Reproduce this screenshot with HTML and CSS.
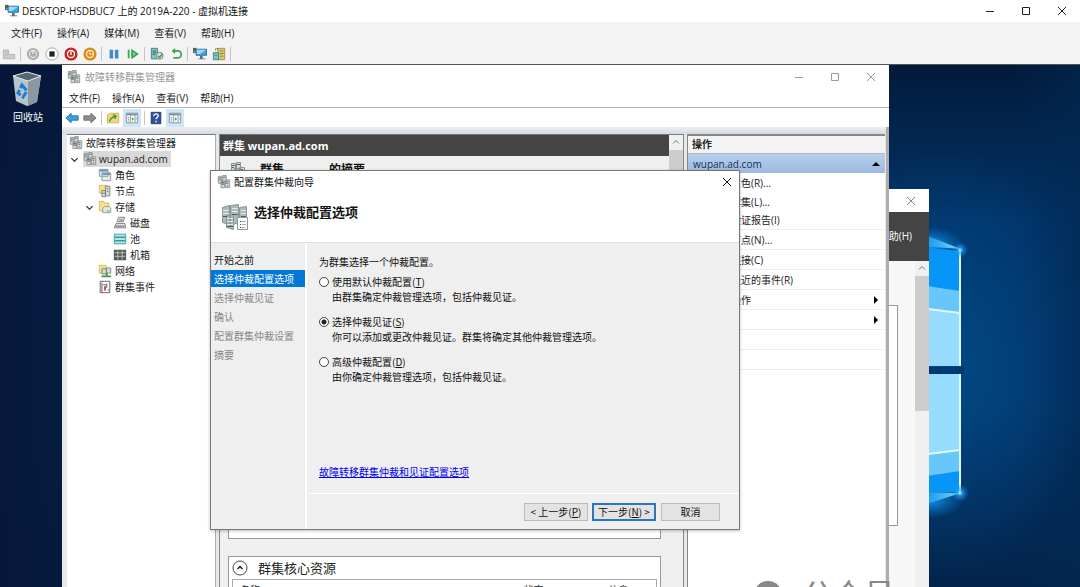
FILE: index.html
```html
<!DOCTYPE html>
<html lang="zh-CN">
<head>
    <meta charset="UTF-8">
    <meta name="viewport" content="width=device-width, initial-scale=1.0">
    <title>虚拟机连接</title>
    <link rel="stylesheet" href="styles.css">
</head>
<body>
    <!-- 公用图标 -->
    <svg class="sprite" aria-hidden="true">
        <symbol id="i-cluster" viewBox="0 0 16 16">
            <path fill="#d5dada" stroke="#8b9293" d="M1.500 1.500h4v8h-4zM6.500 .5h4v9h-4zM4.500 6.500h4v8h-4zM9.500 5.500h5v9h-5z"/>
            <path stroke="#596162" d="M2 3.500h3M7 2.500h3M2 5.500h2M5 8.500h3M5 10.500h3M11 7.500h2M11 9.500h2M11 12.500h2"/>
        </symbol>
        <symbol id="i-folder" viewBox="0 0 16 16">
            <path fill="#f5df87" stroke="#d6b95e" d="M1.500 1.500h5l1 2h5v9h-11z"/>
            <path fill="#e4e8e8" stroke="#8c9293" d="M5.500 9.500l2-2h5l2 2v5h-9z"/>
            <path stroke="#5f8d4f" d="M10 12.500h3"/>
        </symbol>
        <symbol id="i-close" viewBox="0 0 12 12">
            <path fill="none" stroke="currentColor" d="M2 2l8 8M10 2l-8 8"/>
        </symbol>
        <symbol id="i-max" viewBox="0 0 12 12">
            <path fill="none" stroke="currentColor" d="M2.500 2.500h7v7h-7z"/>
        </symbol>
        <symbol id="i-min" viewBox="0 0 12 12">
            <path fill="none" stroke="currentColor" d="M2 6.500h8"/>
        </symbol>
        <symbol id="i-up" viewBox="0 0 12 12">
            <path fill="none" stroke="currentColor" d="M3 7.500l3-3 3 3"/>
        </symbol>
        <symbol id="i-down" viewBox="0 0 12 12">
            <path fill="none" stroke="#444" stroke-width="1.500" d="M2.500 4.500l3.500 3.500 3.500-3.500"/>
        </symbol>
        <symbol id="i-monitor" viewBox="0 0 16 16">
            <path fill="#35a7e3" stroke="#326b91" d="M3.500 2.500h12v7h-12z"/>
            <path fill="#98daf7" d="M4 3h11l-7 5H4z"/>
            <path fill="#5b6e7b" d="M8 10h3v3h3v1H6v-1h2z"/>
            <path fill="#4c6171" d="M0 1h4v6H0z"/>
            <path fill="#8fe27a" d="M1 5h2v1H1z"/>
        </symbol>
        <symbol id="i-panel" viewBox="0 0 16 16">
            <path fill="#fff" stroke="#7a8d9b" d="M1.500 2.500h13v11h-13z"/>
            <path stroke="#7a8d9b" stroke-width="2" d="M2 4h12"/>
            <path fill="none" stroke="#7a8d9b" d="M6.500 5v8M11.500 5v8M3 7.500h2M3 9.500h2M3 11.500h2M13 7.500h1M13 9.500h1"/>
            <path fill="#47a447" d="M8 7l2.500 2L8 11z"/>
        </symbol>
    </svg>

    <header class="vm-title">
        <svg class="icon"><use href="#i-monitor"/></svg>
        <span class="grow">DESKTOP-HSDBUC7 上的 2019A-220 - 虚拟机连接</span>
        <div class="win-buttons dark">
            <button aria-label="最小化"><svg><use href="#i-min"/></svg></button>
            <button aria-label="最大化"><svg><use href="#i-max"/></svg></button>
            <button aria-label="关闭"><svg><use href="#i-close"/></svg></button>
        </div>
    </header>
    <nav class="menu vm-menu">
        <button>文件(F)</button>
        <button>操作(A)</button>
        <button>媒体(M)</button>
        <button>查看(V)</button>
        <button>帮助(H)</button>
    </nav>
    <div class="vm-toolbar">
        <button aria-label="Ctrl+Alt+Del"><svg class="icon" viewBox="0 0 16 16"><path fill="#c9cccd" stroke="#aeb2b3" d="M1.500 3.500h6v5h7v5h-13zM4 6h2M4 9h3"/></svg></button>
        <i class="sep"></i>
        <button aria-label="启动"><svg class="icon" viewBox="0 0 16 16"><circle cx="8" cy="8" r="7" fill="#a9abac"/><circle cx="8" cy="8" r="4" fill="none" stroke="#e4e4e4" stroke-width="1.500"/><path stroke="#eee" stroke-width="1.500" d="M8 4v4"/></svg></button>
        <button aria-label="关闭虚拟机"><svg class="icon" viewBox="0 0 16 16"><circle cx="8" cy="8" r="7" fill="#fff" stroke="#a0a0a0"/><path fill="#222" d="M5 5h6v6H5z"/></svg></button>
        <button aria-label="关机"><svg class="icon" viewBox="0 0 16 16"><circle cx="8" cy="8" r="7.500" fill="#c92520"/><circle cx="8" cy="8" r="4" fill="none" stroke="#fff" stroke-width="1.500"/><path stroke="#fff" stroke-width="1.500" d="M8 5v4"/></svg></button>
        <button aria-label="保存"><svg class="icon" viewBox="0 0 16 16"><circle cx="8" cy="8" r="7.500" fill="#dc8b18"/><circle cx="8" cy="8" r="4" fill="none" stroke="#ffeac0" stroke-width="1.500"/><path stroke="#ffeac0" stroke-width="1.500" d="M8 5v3h3"/></svg></button>
        <i class="sep"></i>
        <button aria-label="暂停"><svg class="icon" viewBox="0 0 16 16"><path fill="#4289c8" d="M3 3h4v10H3zM9 3h4v10H9z"/></svg></button>
        <button aria-label="重置"><svg class="icon" viewBox="0 0 16 16"><path fill="#35a852" d="M2 3h2v10H2z"/><path fill="#8fd39f" stroke="#35a852" stroke-width="2" d="M7 4l6 4-6 4z"/></svg></button>
        <i class="sep"></i>
        <button aria-label="检查点"><svg class="icon" viewBox="0 0 16 16"><path fill="#8cc5bd" stroke="#3f7f78" d="M1.500 1.500h7v12h-7z"/><path stroke="#295e59" d="M3 4.500h4M3 6.500h4M3 8.500h3"/><circle cx="11" cy="10" r="4" fill="#d7e0dc" stroke="#6c7875"/><path fill="none" stroke="#3c9b48" stroke-width="1.500" d="M9 10l2 2 3-4"/></svg></button>
        <button aria-label="还原"><svg class="icon" viewBox="0 0 16 16"><path fill="none" stroke="#3fa24e" stroke-width="2" d="M5 4.500h5a4 4 0 0 1 0 8H5"/><path fill="#3fa24e" d="M7 1v7L3 4.500z"/></svg></button>
        <i class="sep"></i>
        <button aria-label="增强会话"><svg class="icon"><use href="#i-monitor"/></svg></button>
        <button aria-label="共享"><svg class="icon" viewBox="0 0 16 16"><path fill="#e3c367" stroke="#ac8c3b" d="M6.500 1.500h8v13h-8z"/><path fill="#7dc4bb" stroke="#37877c" d="M1.500 6.500h6v8h-6z"/><path fill="none" stroke="#4c8d84" d="M4 4V2h4M9 4.500h4M9 7.500h4M9 10.500h4M3 9.500h3"/></svg></button>
        <i class="sep"></i>
    </div>

    <main class="desktop">
        <svg class="wallpaper" viewBox="0 0 1080 522" preserveAspectRatio="xMaxYMin slice" aria-hidden="true">
            <defs>
                <linearGradient id="sky" x1="0" y1="0" x2="0" y2="1">
                    <stop offset="0" stop-color="#031a3a"/>
                    <stop offset=".3" stop-color="#013468"/>
                    <stop offset=".65" stop-color="#013669"/>
                    <stop offset="1" stop-color="#03234b"/>
                </linearGradient>
                <linearGradient id="dim">
                    <stop offset="0" stop-color="#06183a"/>
                    <stop offset=".4" stop-color="#06183a" stop-opacity="0"/>
                    <stop offset=".94" stop-color="#022852" stop-opacity="0"/>
                    <stop offset="1" stop-color="#022852" stop-opacity=".6"/>
                </linearGradient>
                <radialGradient id="halo">
                    <stop offset="0" stop-color="#0558a0" stop-opacity=".55"/>
                    <stop offset="1" stop-color="#0558a0" stop-opacity="0"/>
                </radialGradient>
                <radialGradient id="spark">
                    <stop offset="0" stop-color="#d8ffff"/>
                    <stop offset=".3" stop-color="#28aaff" stop-opacity=".7"/>
                    <stop offset="1" stop-color="#0783e6" stop-opacity="0"/>
                </radialGradient>
                <linearGradient id="beam">
                    <stop offset="0" stop-color="#0a8eef" stop-opacity=".8"/>
                    <stop offset="1" stop-color="#7fe0ff"/>
                </linearGradient>
                <radialGradient id="glow">
                    <stop offset="0" stop-color="#18a4ff" stop-opacity=".9"/>
                    <stop offset="1" stop-color="#0783e6" stop-opacity="0"/>
                </radialGradient>
            </defs>
            <rect width="1080" height="522" fill="url(#sky)"/>
            <rect width="1080" height="522" fill="url(#dim)"/>
            <ellipse cx="940" cy="300" rx="150" ry="220" fill="url(#halo)"/>
            <ellipse cx="930" cy="180" rx="34" ry="18" fill="url(#glow)"/>
            <ellipse cx="930" cy="434" rx="34" ry="20" fill="url(#glow)"/>
            <path fill="url(#beam)" d="M920 168l41 16-41-3z"/>
            <path fill="url(#beam)" d="M920 427l41 1-41 13z"/>
            <path fill="#0796f8" d="M920 182l40 4v115h-40z"/>
            <path fill="#68c6fb" d="M920 220l40 6v75h-40z"/>
            <path fill="#97dcff" d="M920 243l40 5v53h-40z"/>
            <path fill="#0796f8" d="M920 309h40v118h-40z"/>
            <path fill="#68c6fb" d="M920 309h40v97l-40 6z"/>
            <path fill="#97dcff" d="M920 309h40v76l-40 5z"/>
            <path fill="#013a70" d="M920 302h44v7h-44z"/>
            <path fill="none" stroke="#d9faff" stroke-width="2" d="M920 243l40 5M920 390l40-5M960 186v115M960 309v118"/>
            <circle cx="960" cy="185" r="8" fill="url(#spark)"/>
            <circle cx="960" cy="428" r="9" fill="url(#spark)"/>
        </svg>

        <a class="recycle" href="#">
            <svg viewBox="0 0 36 36" aria-hidden="true">
                <path fill="#b9c3cb" d="M3 5l14-4 14 4-4 26-10 4-11-5z"/>
                <path fill="#8b98a3" d="M18 10l13-5-4 26-9 4z"/>
                <path fill="#566674" stroke="#e4e9ec" d="M3 5l14-4 14 4-13 5z"/>
                <path fill="none" stroke="#1d7fd1" stroke-width="3" stroke-dasharray="7 2" d="M12 14l5 6-4 6-5-4z"/>
            </svg>
            <span>回收站</span>
        </a>

        <!-- 后面的服务器管理器窗口 -->
        <section class="window server-window">
            <div class="server-title">
                <button aria-label="关闭"><svg><use href="#i-close"/></svg></button>
            </div>
            <div class="server-menu">帮助(H)</div>
            <div class="server-body">
                <div class="server-card"></div>
                <div class="scrollbar">
                    <svg><use href="#i-up"/></svg>
                    <div class="thumb"></div>
                </div>
            </div>
        </section>

        <!-- 故障转移群集管理器 -->
        <section class="window manager">
            <header class="manager-title">
                <svg class="icon"><use href="#i-cluster"/></svg>
                <span class="grow">故障转移群集管理器</span>
                <div class="win-buttons">
                    <button aria-label="最小化"><svg><use href="#i-min"/></svg></button>
                    <button aria-label="最大化"><svg><use href="#i-max"/></svg></button>
                    <button aria-label="关闭"><svg><use href="#i-close"/></svg></button>
                </div>
            </header>
            <nav class="menu manager-menu">
                <button>文件(F)</button>
                <button>操作(A)</button>
                <button>查看(V)</button>
                <button>帮助(H)</button>
            </nav>
            <div class="manager-toolbar">
                <button aria-label="后退"><svg class="icon" viewBox="0 0 16 16"><path fill="#39a4de" stroke="#1d6fa5" d="M1 8l6-5.500v3h8v5H7v3z"/></svg></button>
                <button aria-label="前进"><svg class="icon" viewBox="0 0 16 16"><path fill="#8d8d8d" stroke="#6b6b6b" d="M15 8L9 2.500v3H1v5h8v3z"/></svg></button>
                <i class="sep"></i>
                <button aria-label="向上"><svg class="icon" viewBox="0 0 16 16"><path fill="#eed77c" stroke="#c9ad58" d="M1.500 4.500l3-2h10v11h-13z"/><path fill="none" stroke="#44962f" stroke-width="1.500" d="M4 12c1-4 3-5 7-6M8 4l3.500 1.500L10 9"/></svg></button>
                <button class="on" aria-label="控制台树"><svg class="icon"><use href="#i-panel"/></svg></button>
                <i class="sep"></i>
                <button aria-label="帮助"><svg class="icon" viewBox="0 0 16 16"><path fill="#334f9d" stroke="#1d3271" d="M2.500 1.500h11v13h-11z"/><path fill="none" stroke="#fff" stroke-width="1.500" d="M5.500 6c0-4 5-3 5-.5 0 2-2.500 2-2.500 4M8 11v2"/></svg></button>
                <button class="on" aria-label="操作窗格"><svg class="icon"><use href="#i-panel"/></svg></button>
            </div>
            <div class="panes">
                <ul class="tree">
                    <li><svg class="icon"><use href="#i-cluster"/></svg><span>故障转移群集管理器</span></li>
                    <li>
                        <svg class="chevron"><use href="#i-down"/></svg>
                        <span class="current"><svg class="icon"><use href="#i-cluster"/></svg>wupan.ad.com</span>
                    </li>
                    <li class="level-2"><svg class="icon" viewBox="0 0 16 16"><path fill="#e3e9ed" stroke="#87939c" d="M1.500 1.500h10v8h-10zM4.500 5.500h10v9h-10z"/><path stroke="#6593b8" stroke-width="2" d="M2 3h9M5 7h9"/></svg><span>角色</span></li>
                    <li class="level-2"><svg class="icon" viewBox="0 0 16 16"><path fill="#f5df87" stroke="#d6b95e" d="M1.500 1.500h9v9h-9z"/><path fill="#d6dcd9" stroke="#77807c" d="M8.500 2.500h5v11h-5zM4.500 7.500h4v7h-4z"/><path stroke="#61865a" d="M10 5.500h2M10 8.500h2M5 10.500h3"/></svg><span>节点</span></li>
                    <li class="level-1"><svg class="chevron"><use href="#i-down"/></svg><svg class="icon"><use href="#i-folder"/></svg><span>存储</span></li>
                    <li class="level-3"><svg class="icon" viewBox="0 0 16 16"><path fill="#e3e5e5" stroke="#707778" d="M6.500 1.500h7l-2 5h-7zM3.500 8.500h10l1 5h-13z"/><path stroke="#4e5556" d="M3 11.500h10M7 4.500h4"/></svg><span>磁盘</span></li>
                    <li class="level-3"><svg class="icon" viewBox="0 0 16 16"><path fill="#b4e7e7" stroke="#3b9699" d="M1.500 2.500h13v11h-13z"/><path stroke="#3b9699" stroke-width="1.500" d="M2 6h12M2 10h12"/></svg><span>池</span></li>
                    <li class="level-3"><svg class="icon" viewBox="0 0 16 16"><path fill="#555b58" d="M1 2h14v12H1z"/><path stroke="#c3cac6" d="M2 5.500h12M2 9.500h12M5.500 3v10M10.500 3v10"/></svg><span>机箱</span></li>
                    <li class="level-2"><svg class="icon" viewBox="0 0 16 16"><path fill="#f5df87" stroke="#d6b95e" d="M1.500 1.500h8v9h-8z"/><path fill="#d6dcd9" stroke="#77807c" d="M4.500 5.500h5v6h-5zM9.500 4.500h5v6h-5z"/><path stroke="#3d9b49" stroke-width="2" d="M4 14h11M10 10v4"/></svg><span>网络</span></li>
                    <li class="level-2"><svg class="icon" viewBox="0 0 16 16"><path fill="#fff" stroke="#555" d="M2.500 1.500h11v13h-11z"/><path stroke="#444" d="M4.500 3v11M6 5.500h3M10 4v5M11 11.500h2"/><path stroke="#bd3854" stroke-width="2" d="M8 7v5"/></svg><span>群集事件</span></li>
                </ul>

                <div class="detail">
                    <div class="detail-main">
                        <h2>群集 wupan.ad.com</h2>
                        <div class="detail-body">
                            <div class="summary"><svg><use href="#i-cluster"/></svg><span>群集</span><span>的摘要</span></div>
                            <div class="card summary-card"></div>
                            <div class="card">
                                <h3><svg viewBox="0 0 16 16"><circle cx="8" cy="8" r="7" fill="#fff" stroke="#444"/><path fill="none" stroke="#222" stroke-width="1.500" d="M5.500 9L8 6.500 10.500 9"/></svg>群集核心资源</h3>
                                <table>
                                    <tr><th>名称</th><th>状态</th><th>信息</th></tr>
                                </table>
                            </div>
                        </div>
                    </div>
                    <div class="scrollbar">
                        <svg><use href="#i-up"/></svg>
                        <div class="thumb"></div>
                    </div>
                </div>

                <aside class="actions">
                    <h2>操作</h2>
                    <h3>wupan.ad.com<svg viewBox="0 0 8 8"><path d="M0 6l4-4 4 4z"/></svg></h3>
                    <ul>
                        <li>配置角色(R)...</li>
                        <li>验证群集(L)...</li>
                        <li>查看验证报告(I)</li>
                        <li>添加节点(N)...</li>
                        <li>关闭连接(C)</li>
                        <li>重置最近的事件(R)</li>
                        <li>更多操作<svg viewBox="0 0 8 8"><path d="M2 0l4 4-4 4z"/></svg></li>
                        <li>查看<svg viewBox="0 0 8 8"><path d="M2 0l4 4-4 4z"/></svg></li>
                        <li></li>
                        <li></li>
                    </ul>
                </aside>
            </div>
        </section>

        <!-- 配置群集仲裁向导 -->
        <section class="window wizard">
            <header class="wizard-title">
                <svg class="icon"><use href="#i-cluster"/></svg>
                <span class="grow">配置群集仲裁向导</span>
                <button aria-label="关闭"><svg><use href="#i-close"/></svg></button>
            </header>
            <div class="wizard-head">
                <svg viewBox="0 0 28 28" aria-hidden="true">
                    <path fill="#aeb9b9" stroke="#8b9696" d="M1.500 4.500l7-2v19l-7-2zM9.500 2.500l8-1v18l-8 3zM18.500 4.500l7-1v19l-7-1zM5.500 12.500l7-1v15l-7-2z"/>
                    <path stroke="#e3e9e9" d="M2 7.500h6M2 10.500h6M11 5.500h6M11 8.500h6M20 7.500h5M20 10.500h5M6 15.500h6M6 18.500h6M6 21.500h6"/>
                    <path stroke="#4e5b5b" d="M2 13.500h4M11 11.500h6M20 13.500h5M6 23.500h6"/>
                    <path fill="#fff" stroke="#8f9999" d="M16.500 14.500h10v12h-10z"/>
                    <path stroke="#444" d="M19 18.500h1M19 21.500h1M19 24.500h1"/>
                    <path stroke="#aaa" d="M21 18.500h4M21 21.500h4M21 24.500h3"/>
                </svg>
                <h1>选择仲裁配置选项</h1>
            </div>
            <div class="wizard-body">
                <ol class="steps">
                    <li class="done">开始之前</li>
                    <li class="active">选择仲裁配置选项</li>
                    <li>选择仲裁见证</li>
                    <li>确认</li>
                    <li>配置群集仲裁设置</li>
                    <li>摘要</li>
                </ol>
                <form class="options">
                    <div class="options-main">
                        <p>为群集选择一个仲裁配置。</p>
                        <div class="option">
                            <input type="radio" name="quorum" id="q-default">
                            <label for="q-default">使用默认仲裁配置(<u>T</u>)</label>
                            <p>由群集确定仲裁管理选项，包括仲裁见证。</p>
                        </div>
                        <div class="option">
                            <input type="radio" name="quorum" id="q-witness" checked>
                            <label for="q-witness">选择仲裁见证(<u>S</u>)</label>
                            <p>你可以添加或更改仲裁见证。群集将确定其他仲裁管理选项。</p>
                        </div>
                        <div class="option">
                            <input type="radio" name="quorum" id="q-advanced">
                            <label for="q-advanced">高级仲裁配置(<u>D</u>)</label>
                            <p>由你确定仲裁管理选项，包括仲裁见证。</p>
                        </div>
                        <a href="#">故障转移群集仲裁和见证配置选项</a>
                    </div>
                    <div class="wizard-buttons">
                        <button type="button">&lt; 上一步(<u>P</u>)</button>
                        <button type="button" class="primary">下一步(<u>N</u>) &gt;</button>
                        <button type="button" class="cancel">取消</button>
                    </div>
                </form>
            </div>
        </section>

        <div class="watermark"><i></i>公众号</div>
    </main>
</body>
</html>
```
FILE: styles.css
```css
* {
    margin: 0;
    padding: 0;
    box-sizing: border-box;
}

body {
    height: 100vh;
    display: flex;
    flex-direction: column;
    overflow: hidden;
    font-family: "Open Sans", "Noto Sans CJK SC", sans-serif;
    font-size: 10px;
    line-height: 16px;
    color: #222;
    background: #f3f3f3;
}

button {
    font: inherit;
    color: inherit;
    background: none;
    border: none;
}

ul,
ol {
    list-style: none;
}

svg {
    display: block;
    flex: none;
    width: 12px;
    height: 12px;
}

.sprite {
    position: absolute;
    width: 0;
    height: 0;
}

.icon {
    width: 14px;
    height: 14px;
}

.grow {
    flex: 1;
}

.sep {
    width: 1px;
    height: 14px;
    background: #c4c4c4;
}

/* 虚拟机连接窗口 */
.vm-title {
    display: flex;
    align-items: center;
    gap: 3px;
    height: 22px;
    padding-left: 5px;
    background: #fff;
    color: #111;
}

.win-buttons {
    display: flex;
    color: #999;
}

.win-buttons button {
    width: 36px;
    display: flex;
    justify-content: center;
}

.win-buttons.dark {
    color: #222;
}

.menu {
    display: flex;
    align-items: center;
    gap: 15px;
}

.vm-menu {
    height: 22px;
    padding-left: 11px;
}

.vm-toolbar {
    display: flex;
    align-items: center;
    gap: 5px;
    height: 21px;
    padding-left: 2px;
    border-bottom: 1px solid #555;
}

.vm-toolbar .sep {
    margin-left: -1px;
}

/* 桌面 */
.desktop {
    flex: 1;
    position: relative;
    overflow: hidden;
}

.wallpaper {
    position: absolute;
    inset: 0;
    width: 100%;
    height: 100%;
}

.recycle {
    position: absolute;
    left: 4px;
    top: 6px;
    width: 48px;
    display: flex;
    flex-direction: column;
    align-items: center;
    gap: 2px;
    color: #fff;
    text-decoration: none;
}

.recycle svg {
    width: 36px;
    height: 36px;
}

.window {
    position: absolute;
    display: flex;
    flex-direction: column;
}

.scrollbar {
    width: 14px;
    background: #f0f0f0;
    color: #777;
    display: flex;
    flex-direction: column;
    align-items: center;
    gap: 2px;
    padding-top: 1px;
}

.thumb {
    width: 100%;
    height: 135px;
    background: #cdcdcd;
}

/* 后面的窗口 */
.server-window {
    left: 529px;
    top: 124px;
    bottom: 0;
    width: 400px;
    background: #f7f7f7;
}

.server-title {
    height: 23px;
    display: flex;
    align-items: center;
    justify-content: flex-end;
    padding-right: 12px;
    background: #fff;
    color: #888;
}

.server-menu {
    height: 49px;
    padding-right: 17px;
    line-height: 49px;
    text-align: right;
    color: #fff;
    background: #444;
}

.server-body {
    flex: 1;
    display: flex;
    justify-content: flex-end;
    gap: 17px;
}

.server-card {
    width: 300px;
    height: 221px;
    margin-top: 44px;
    border: 1px solid #999;
    background: #fff;
}

/* 群集管理器 */
.manager {
    left: 62px;
    top: 0;
    bottom: 0;
    width: 827px;
    background: #fff;
}

.manager-title {
    display: flex;
    align-items: center;
    gap: 4px;
    height: 23px;
    padding-left: 5px;
    color: #999;
}

.manager-menu {
    gap: 12px;
    height: 20px;
    padding-left: 7px;
    border-bottom: 1px solid #b5b5b5;
}

.manager-toolbar {
    display: flex;
    align-items: center;
    gap: 2px;
    height: 19px;
    padding-left: 2px;
}

.manager-toolbar .sep {
    margin: 0 1px;
}

.manager-toolbar button {
    padding: 1px;
}

.manager-toolbar .on {
    padding: 2px;
    background: #cfe6f7;
}

.panes {
    flex: 1;
    display: flex;
    gap: 3px;
    min-height: 0;
    padding: 7px 1px 0 5px;
    background: linear-gradient(#eceff2, #d5dae1 7px, #e6e8ea 8px);
    border-right: 3px solid #adadad;
}

.tree {
    width: 149px;
    background: #fff;
    border-top: 1px solid #777;
    border-right: 1px solid #aaa;
}

.tree li {
    display: flex;
    align-items: center;
    gap: 3px;
    height: 16px;
    padding-left: 2px;
}

.chevron {
    width: 11px;
    height: 11px;
}

.current {
    display: flex;
    align-items: center;
    gap: 2px;
    padding-right: 3px;
    background: #d9d9d9;
}

.tree .level-1 {
    padding-left: 17px;
}

.tree .level-2 {
    padding-left: 31px;
}

.tree .level-3 {
    padding-left: 46px;
}

.detail {
    flex: 1;
    display: flex;
    min-width: 0;
    border-top: 1px solid #777;
    border-left: 1px solid #888;
    border-right: 1px solid #888;
    background: #efefef;
}

.detail-main {
    flex: 1;
}

.detail h2 {
    height: 21px;
    padding-left: 3px;
    font-size: 11px;
    line-height: 21px;
    color: #fff;
    background: #444;
}

.detail-body {
    padding: 4px 8px;
}

.summary {
    display: flex;
    align-items: center;
    gap: 12px;
    height: 20px;
    font-size: 12px;
    font-weight: bold;
    color: #111;
}

.summary svg {
    width: 20px;
    height: 16px;
}

.summary span + span {
    margin-left: 33px;
}

.card {
    padding: 0 3px;
    border: 1px solid #999;
    background: #fff;
    height: 60px;
}

.summary-card {
    height: 359px;
    margin-bottom: 17px;
}

.card h3 {
    display: flex;
    align-items: center;
    gap: 10px;
    height: 22px;
    font-size: 13px;
    font-weight: normal;
}

.card h3 svg {
    width: 16px;
    height: 16px;
}

.card table {
    width: 100%;
    border: 1px solid #aaa;
    border-collapse: collapse;
}

.card th {
    padding: 2px 0 0 7px;
    text-align: left;
    font-weight: normal;
}

.card th:nth-child(1) {
    width: 67%;
}

.card th:nth-child(2) {
    width: 20%;
}

.detail .scrollbar .thumb {
    height: 300px;
}

.actions {
    width: 198px;
    background: #fff;
    border-top: 2px solid #888;
    border-left: 1px solid #888;
}

.actions h2 {
    height: 18px;
    padding-left: 4px;
    font-size: 10px;
    line-height: 17px;
    background: #f3f3f3;
    border-bottom: 1px solid #bbb;
}

.actions h3 {
    display: flex;
    align-items: center;
    justify-content: space-between;
    height: 19px;
    padding: 0 5px;
    font-size: 10px;
    font-weight: normal;
    color: #15305a;
    background: linear-gradient(#b6cfee, #9db9dd);
}

.actions svg {
    width: 8px;
    height: 8px;
}

.actions li {
    display: flex;
    align-items: center;
    justify-content: space-between;
    height: 20px;
    padding: 0 5px 0 23px;
    border-bottom: 1px solid #eee;
}

.actions li:nth-child(-n+3) {
    height: 19px;
}

.actions li:nth-child(-n+2) {
    border-bottom: none;
}

/* 向导 */
.wizard {
    left: 210px;
    top: 105px;
    width: 530px;
    height: 360px;
    border: 1px solid #777;
    background: #efefef;
    font-family: "Noto Sans CJK SC", sans-serif;
    color: #111;
    box-shadow: 0 1px 3px rgba(0, 0, 0, 0.25);
}

.wizard-title {
    display: flex;
    align-items: center;
    gap: 3px;
    height: 22px;
    padding: 0 6px;
    background: #fff;
}

.wizard-head {
    display: flex;
    gap: 5px;
    height: 50px;
    padding: 10px 10px 0;
    background: #fff;
    border-bottom: 1px solid #ddd;
}

.wizard-head svg {
    width: 28px;
    height: 28px;
}

.wizard-head h1 {
    font-size: 13px;
    line-height: 18px;
}

.wizard-body {
    flex: 1;
    display: flex;
    gap: 2px;
}

.steps {
    width: 96px;
    padding-top: 8px;
    border-right: 2px solid #fff;
}

.steps li {
    height: 17px;
    margin-bottom: 2px;
    padding-left: 3px;
    line-height: 17px;
    color: #888;
}

.steps .done {
    color: #111;
}

.steps .active {
    color: #fff;
    background: #0078d7;
}

.options {
    flex: 1;
    display: flex;
    flex-direction: column;
}

.options-main {
    flex: 1;
    padding: 11px 10px 10px;
    border-bottom: 1px solid #fff;
    display: flex;
    flex-direction: column;
}

.option {
    display: grid;
    grid-template-columns: 13px 1fr;
    align-items: center;
    line-height: 15px;
    margin-top: 4px;
}

.option + .option {
    margin-top: 10px;
}

.option p {
    grid-column: 2;
}

.option input {
    appearance: none;
    width: 10px;
    height: 10px;
    border: 1px solid #444;
    border-radius: 50%;
    background: #fff;
}

.option input:checked {
    background: radial-gradient(#222 0 2px, #fff 3px);
}

.options a {
    margin-top: auto;
    margin-bottom: 3px;
    align-self: flex-start;
    color: #0000ee;
}

.wizard-buttons {
    display: flex;
    align-items: center;
    justify-content: flex-end;
    gap: 4px;
    height: 35px;
    padding-right: 19px;
}

.wizard-buttons button {
    width: 64px;
    height: 18px;
    line-height: 16px;
    border: 1px solid #bbb;
    background: #e3e3e3;
    white-space: nowrap;
}

.wizard-buttons .primary {
    border: 2px solid #2b76bd;
    line-height: 14px;
}

.wizard-buttons .cancel {
    width: 59px;
    margin-left: 1px;
}

/* 右下角水印 */
.watermark {
    position: absolute;
    left: 754px;
    top: 514px;
    display: flex;
    gap: 20px;
    font-size: 31px;
    line-height: 31px;
    color: #888;
}

.watermark i {
    width: 28px;
    height: 28px;
    margin-top: 2px;
    border-radius: 50%;
    background: #888;
}
```
